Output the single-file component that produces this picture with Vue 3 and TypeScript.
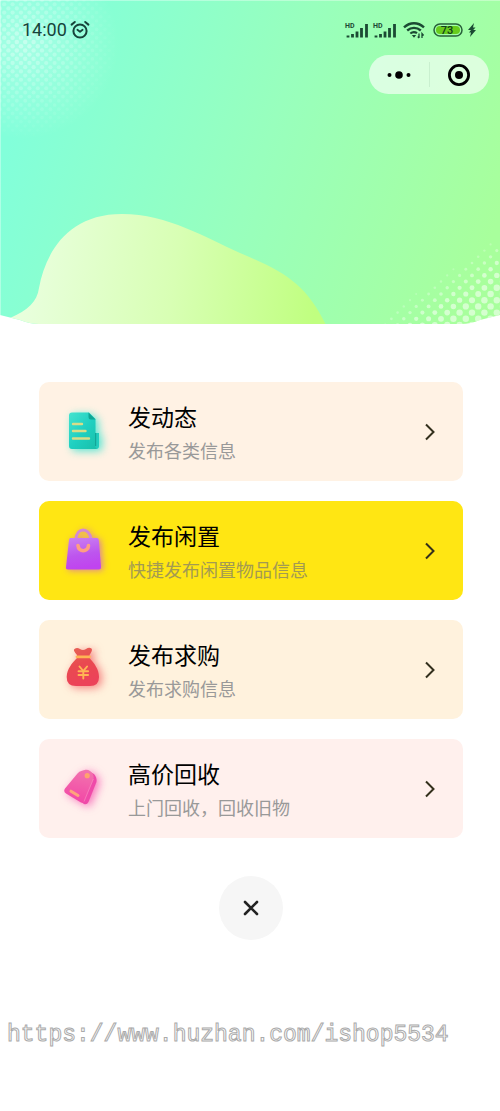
<script setup lang="ts">
interface Dot {
  x: number
  y: number
  r: number
  o: number
}

interface PublishEntry {
  id: 'post' | 'idle' | 'wanted' | 'recycle'
  title: string
  note: string
}

const entries: PublishEntry[] = [
  { id: 'post', title: '发动态', note: '发布各类信息' },
  { id: 'idle', title: '发布闲置', note: '快捷发布闲置物品信息' },
  { id: 'wanted', title: '发布求购', note: '发布求购信息' },
  { id: 'recycle', title: '高价回收', note: '上门回收，回收旧物' },
]

// Halftone patches: staggered grids whose dots shrink or fade towards the edge.
function cornerDots(): Dot[] {
  const dots: Dot[] = []
  for (let row = 0; row < 15; row++) {
    const y = 325 - row * 6.2
    for (let col = 0; col < 14; col++) {
      const x = 503 - col * 12.4 - (row % 2 ? 0 : 6.2)
      const t = (x - 372) / 128 + (y - 324) / 88
      if (t > 0) dots.push({ x, y, r: Math.min(3.2, 1 + t * 4), o: Math.min(0.52, 0.2 + t) })
    }
  }
  return dots
}

function glowDots(): Dot[] {
  const dots: Dot[] = []
  for (let row = 0; row < 33; row++) {
    const y = row * 4.2
    for (let col = 0; col < 15; col++) {
      const x = col * 8.4 + (row % 2 ? 4.2 : 0)
      const d = Math.hypot(x - 22, y - 42) / 98
      if (d < 1) dots.push({ x, y, r: 2.3 - d * 0.6, o: 0.36 * (1 - d) })
    }
  }
  return dots
}

const lowerDots = cornerDots()
const upperDots = glowDots()
</script>

<template>
  <div class="page">
    <header class="hero">
      <svg class="hero-art" viewBox="0 0 500 324" preserveAspectRatio="none" aria-hidden="true">
        <defs>
          <linearGradient id="sky" gradientUnits="userSpaceOnUse" x1="20" y1="110" x2="480" y2="270">
            <stop offset="0" stop-color="#82ffda" />
            <stop offset="0.5" stop-color="#98ffbd" />
            <stop offset="1" stop-color="#a8ff9c" />
          </linearGradient>
          <linearGradient id="hill" gradientUnits="userSpaceOnUse" x1="30" y1="270" x2="315" y2="310">
            <stop offset="0" stop-color="#e8ffdc" />
            <stop offset="0.5" stop-color="#d8ffb4" />
            <stop offset="1" stop-color="#c0ff80" />
          </linearGradient>
          <radialGradient id="glow" gradientUnits="userSpaceOnUse" cx="24" cy="44" r="95">
            <stop offset="0" stop-color="#fff" stop-opacity="0.3" />
            <stop offset="1" stop-color="#fff" stop-opacity="0" />
          </radialGradient>
          <clipPath id="edge">
            <path d="M0 0H500V315L480 320Q471 324 461 324H39Q30 324 20 320L0 315Z" />
          </clipPath>
        </defs>
        <g clip-path="url(#edge)">
          <rect width="500" height="324" fill="url(#sky)" />
          <rect width="130" height="150" fill="url(#glow)" />
          <circle v-for="(d, i) in upperDots" :key="'u' + i" :cx="d.x" :cy="d.y" :r="d.r" fill="#fff" :fill-opacity="d.o" />
          <circle v-for="(d, i) in lowerDots" :key="'l' + i" :cx="d.x" :cy="d.y" :r="d.r" fill="#fff" :fill-opacity="d.o" />
          <path
            d="M10 318C28 310 37 302 39 288C45 255 66 214 122 214C168 214 206 238 240 253C285 272 306 284 326 325H10Z"
            fill="url(#hill)"
          />
          <path d="M0 0.5H500M0.5 0V324" stroke="#fff" stroke-opacity="0.35" fill="none" />
        </g>
      </svg>

      <div class="status">
        <div class="status-side">
          <span class="clock">14:00</span>
          <svg width="20" height="20" viewBox="0 0 20 20" fill="none" stroke="#17433a" stroke-linecap="round" aria-hidden="true">
            <circle cx="10" cy="11" r="6.6" stroke-width="2" />
            <path d="M1.6 4.6L4.8 2M18.4 4.6L15.2 2" stroke-width="2" />
            <path d="M7.4 9.8L10 11.8L12.6 9.8" stroke-width="1.8" stroke-linejoin="round" />
          </svg>
        </div>
        <div class="status-side">
          <svg v-for="n in 2" :key="n" class="signal" width="24" height="20" viewBox="0 0 24 20" aria-hidden="true">
            <text class="hd" x="0" y="8">HD</text>
            <path d="M3 15.500V17.500M7.500 14V17.500M12 11.500V17.500M16.500 8V17.500M21.500 4V17.500" stroke="#1b4a33" stroke-width="2.800" />
          </svg>
          <svg class="wifi" width="22" height="18" viewBox="0 0 22 18" fill="none" stroke="#1b4a33" aria-hidden="true">
            <path d="M1 6.300C7 .8 15 .8 21 6.300M4.200 9.500C8.200 6 13.800 6 17.800 9.500" stroke-width="2.400" />
            <path d="M7.300 12.500C9.500 10.700 12 10.700 14 12.200" stroke-width="2.200" />
            <path d="M8.800 14L11 16.800L13.200 14Z" fill="#1b4a33" stroke="none" />
            <path d="M16 12.500V17M14.800 15.500L16 17M19 17V12.500L20.600 14.500" stroke-width="1.300" />
          </svg>
          <svg class="battery" width="30" height="14" viewBox="0 0 30 14" aria-hidden="true">
            <rect x="3" y="3" width="24" height="8" rx="4" fill="#68cc1d" />
            <rect x="1" y="1" width="28" height="12" rx="6" fill="none" stroke="#28603a" stroke-width="1.500" />
            <text class="charge" x="14" y="11" text-anchor="middle">73</text>
          </svg>
          <svg width="8" height="14" viewBox="0 0 8 14" aria-hidden="true">
            <path d="M6 0L0 7H3L1 9.500H3L2 14L8 7H5.200L7.500 4.500H5Z" fill="#1b4a33" />
          </svg>
        </div>
      </div>

      <div class="capsule">
        <button type="button" class="capsule-btn" aria-label="更多">
          <svg width="24" height="10" viewBox="0 0 24 10" aria-hidden="true">
            <circle cx="2.500" cy="5" r="2" />
            <circle cx="12" cy="5" r="3.800" />
            <circle cx="21.500" cy="5" r="2" />
          </svg>
        </button>
        <button type="button" class="capsule-btn" aria-label="退出">
          <svg width="24" height="24" viewBox="0 0 24 24" aria-hidden="true">
            <circle cx="12" cy="12" r="9.600" fill="none" stroke="#000" stroke-width="2.800" />
            <circle cx="12" cy="12" r="4" />
          </svg>
        </button>
      </div>
    </header>

    <main class="content">
      <button v-for="entry in entries" :key="entry.id" type="button" class="card" :class="entry.id">
        <svg v-if="entry.id === 'post'" class="icon" viewBox="0 0 64 64" aria-hidden="true">
          <defs>
            <linearGradient id="paper" x1="0" y1="0" x2="1" y2="1">
              <stop offset="0" stop-color="#46e3cf" />
              <stop offset="0.5" stop-color="#1fd0c1" />
              <stop offset="1" stop-color="#19bfa9" />
            </linearGradient>
          </defs>
          <path d="M40 33H47V46Q47 49 44 49H38Z" fill="#23cdbd" />
          <path d="M20 12.500H37L43.500 19V46.500Q43.500 49 46 49H20Q17 49 17 46V15.500Q17 12.500 20 12.500Z" fill="url(#paper)" />
          <path d="M36.500 12.500L43.500 19.500H39Q36.500 19.500 36.500 17Z" fill="#0fa695" />
          <path d="M43.700 33V46" stroke="#109d92" stroke-width="1" />
          <path d="M21 24H30M21 31H33.500M21 38.500H37" stroke="#d9dc88" stroke-width="2.400" stroke-linecap="round" />
        </svg>
        <svg v-else-if="entry.id === 'idle'" class="icon" viewBox="0 0 64 64" aria-hidden="true">
          <defs>
            <linearGradient id="bag" x1="0" y1="0" x2="0.200" y2="1">
              <stop offset="0" stop-color="#cb82f1" />
              <stop offset="0.600" stop-color="#bd55ee" />
              <stop offset="1" stop-color="#c044ef" />
            </linearGradient>
          </defs>
          <path d="M24 20C25 8 37 8 39 20" fill="none" stroke="#d489d4" stroke-width="3" />
          <path d="M18.500 19H45Q46.500 19 46.800 21L49 48Q49.200 50.500 47 50.500H16Q13.500 50.500 14 48L17 21Q17.200 19 18.500 19Z" fill="url(#bag)" />
          <path d="M26 26.500C26.500 33.500 36 33.500 36.500 26.500" fill="none" stroke="#ff9f81" stroke-width="3.600" stroke-linecap="round" />
        </svg>
        <svg v-else-if="entry.id === 'wanted'" class="icon" viewBox="0 0 64 64" aria-hidden="true">
          <defs>
            <linearGradient id="sack" x1="0" y1="0" x2="0.300" y2="1">
              <stop offset="0" stop-color="#e66456" />
              <stop offset="0.500" stop-color="#e94a50" />
              <stop offset="1" stop-color="#ec4259" />
            </linearGradient>
          </defs>
          <path d="M22.500 11Q25 9 28 11Q31 13 34 11Q37 9 39.500 10.500Q41 12 37.500 17V20C42 25 47 31 47 39Q47 48 38 48H24Q14.500 48 14.700 39C15 31 20 25 25 20V17Q20.500 12 22.500 11Z" fill="url(#sack)" />
          <path d="M25 18.800H37.500" stroke="#ffb554" stroke-width="2.800" stroke-linecap="round" />
          <g fill="none" stroke="#ffb554" stroke-width="1.900" stroke-linecap="round">
            <path d="M27.500 28.500L31.300 33L35.100 28.500M31.300 33V40.500" />
            <path d="M26.500 33.300H36.100M26.500 37H36.100" />
          </g>
        </svg>
        <svg v-else class="icon" viewBox="0 0 64 64" aria-hidden="true">
          <defs>
            <linearGradient id="tag" x1="0.600" y1="0" x2="0.400" y2="1">
              <stop offset="0" stop-color="#f273ae" />
              <stop offset="1" stop-color="#f246a6" />
            </linearGradient>
          </defs>
          <path d="M36 14L42 17Q45 20 44.500 25L36.500 45Q35 48 32 47L25 42Z" fill="#ef4aa9" />
          <path d="M13 31.500L25.500 16.500Q27 14.500 30 13.700L33.500 12.800Q36 12.500 38 14Q41.500 16.500 41.700 20.500Q41.700 22.500 40.500 25L32 44.500Q31 46.500 28.500 45.300L14 36.500Q11 34.500 13 31.500Z" fill="url(#tag)" />
          <path d="M41.300 22L32 44.500" stroke="#f883bc" stroke-width="0.800" />
          <circle cx="35.200" cy="18.700" r="2.600" fill="#ffa36e" />
          <path d="M19 34.200L26 38.500" stroke="#ffa37c" stroke-width="3" stroke-linecap="round" />
        </svg>
        <span class="copy">
          <span class="title">{{ entry.title }}</span>
          <span class="note">{{ entry.note }}</span>
        </span>
        <svg class="chevron" width="12" height="18" viewBox="0 0 12 18" aria-hidden="true">
          <path d="M2 1.500L9.500 9L2 16.500" fill="none" stroke="#33301c" stroke-width="2" />
        </svg>
      </button>

      <button type="button" class="close" aria-label="关闭">
        <svg width="16" height="16" viewBox="0 0 16 16" aria-hidden="true">
          <path d="M2 2L14 14M14 2L2 14" stroke="#222" stroke-width="2.600" stroke-linecap="round" />
        </svg>
      </button>
    </main>

    <footer class="site">https://www.huzhan.com/ishop5534</footer>
  </div>
</template>

<style>
body {
  background: #fff;
}
</style>

<style scoped>
.page {
  font-family: "Noto Sans CJK SC", "Noto Sans", sans-serif;
  background: #fff;
}

button {
  border: 0;
  padding: 0;
  background: none;
  font: inherit;
  cursor: pointer;
}

svg {
  display: block;
  flex: none;
}

.hero {
  position: relative;
  height: 324px;
}

.hero-art {
  position: absolute;
  inset: 0;
  width: 100%;
  height: 100%;
}

.status {
  position: relative;
  display: flex;
  justify-content: space-between;
  align-items: center;
  padding: 18px 24px 0 22px;
}

.status-side {
  display: flex;
  align-items: center;
  gap: 3px;
  height: 24px;
}

.clock {
  font-family: Roboto, sans-serif;
  font-size: 18px;
  line-height: 24px;
  color: #17433a;
}

.signal {
  margin-right: 1px;
  overflow: visible;
}

.hd {
  font: 700 7px Roboto, sans-serif;
  fill: #1b4a33;
}

.wifi {
  margin-left: 2px;
}

.battery {
  margin: 0 2px 0 5px;
}

.charge {
  font: 500 11px Roboto, sans-serif;
  fill: #123f1e;
}

.capsule {
  position: relative;
  display: flex;
  width: 120px;
  height: 39px;
  margin: 13px 11px 0 auto;
  border-radius: 20px;
  background: rgba(255, 255, 255, 0.62);
}

.capsule-btn {
  flex: 1;
  display: flex;
  align-items: center;
  justify-content: center;
}

.capsule-btn + .capsule-btn {
  position: relative;
}

.capsule-btn + .capsule-btn::before {
  content: "";
  position: absolute;
  left: 0;
  top: 7px;
  bottom: 7px;
  width: 1px;
  background: rgba(0, 60, 20, 0.08);
}

.content {
  display: flex;
  flex-direction: column;
  gap: 20px;
  padding: 58px 37px 0 39px;
}

.card {
  display: flex;
  align-items: center;
  gap: 12px;
  height: 99px;
  padding: 0 27px 0 13px;
  border-radius: 10px;
  text-align: left;
}

.post {
  background: #fff2e4;
}

.idle {
  background: #ffe613;
}

.wanted {
  background: #fff2dd;
}

.recycle {
  background: #fff0ed;
}

.icon {
  width: 64px;
  height: 64px;
  overflow: visible;
}

.post .icon {
  filter: drop-shadow(3px 2px 4px rgba(30, 225, 205, 0.75));
}

.idle .icon {
  filter: drop-shadow(2px 1px 3px rgba(205, 90, 220, 0.7));
}

.wanted .icon {
  filter: drop-shadow(3px 2px 4px rgba(240, 70, 80, 0.65));
}

.recycle .icon {
  filter: drop-shadow(3px 2px 4px rgba(245, 70, 170, 0.7));
}

.copy {
  flex: 1;
  display: flex;
  flex-direction: column;
  gap: 4px;
}

.title {
  font-size: 23px;
  line-height: 32px;
  color: #000;
}

.note {
  font-size: 18px;
  line-height: 28px;
  color: #999;
}

.idle .note {
  color: #a39a52;
}

.close {
  display: flex;
  align-items: center;
  justify-content: center;
  align-self: center;
  width: 64px;
  height: 64px;
  margin-top: 18px;
  border-radius: 50%;
  background: #f6f6f6;
}

.site {
  padding: 79px 7px 60px;
  font-family: "Liberation Mono", monospace;
  font-size: 23px;
  line-height: 32px;
  color: #fff;
  -webkit-text-stroke: 1px #aaa;
}
</style>
